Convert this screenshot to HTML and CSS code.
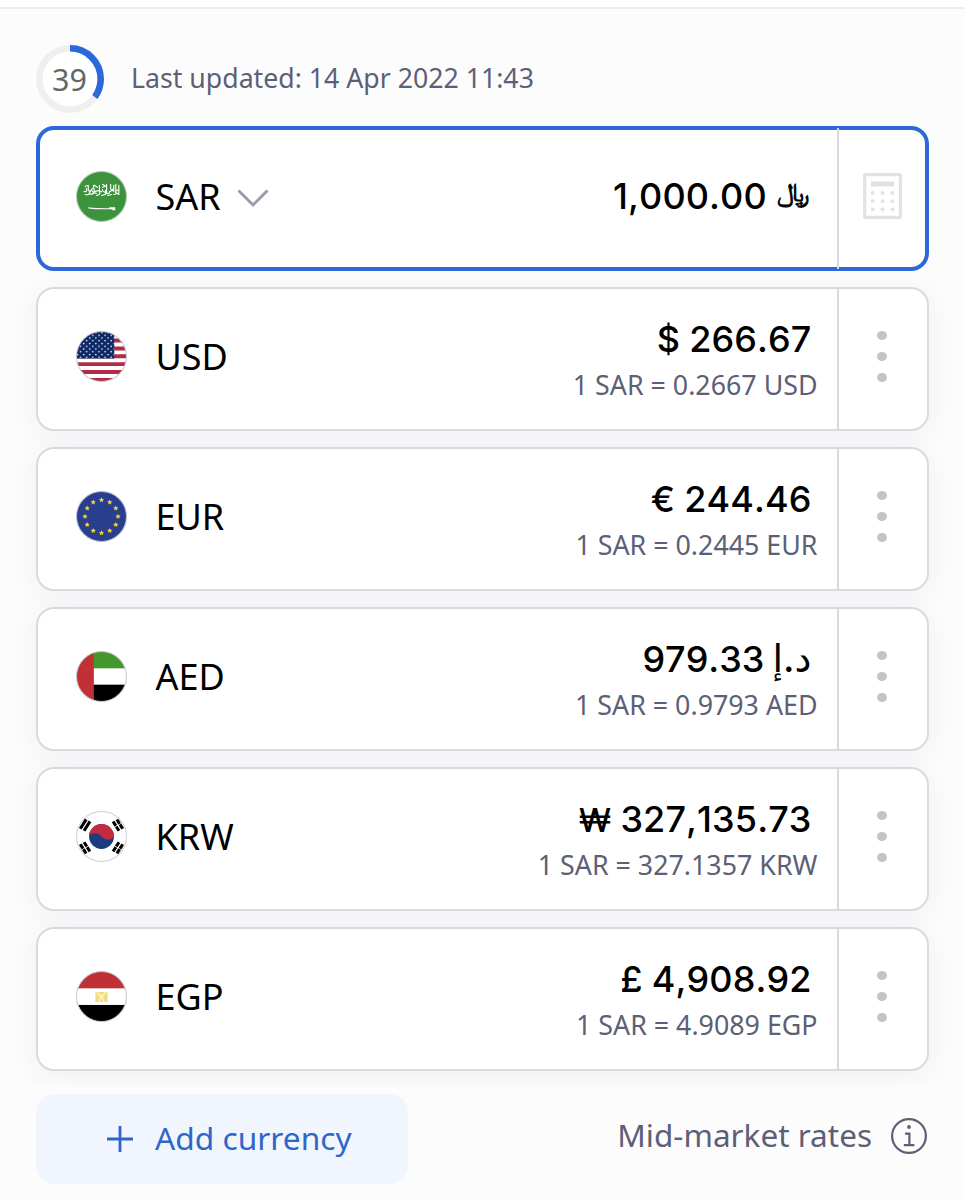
FILE: index.html
```
<!DOCTYPE html>
<html lang="en">
<head>
    <meta charset="UTF-8">
    <meta name="viewport" content="width=device-width, initial-scale=1.0">
    <title>Currency Converter</title>
    <link rel="stylesheet" href="styles.css">
</head>
<body>
    <div class="topbar"></div>
    <main class="converter">
        <div class="status">
            <div class="timer">
                <svg width="68" height="68" viewBox="0 0 68 68">
                    <circle cx="34" cy="34" r="30.7" fill="#fff" stroke="#efefef" stroke-width="6.6"/>
                    <circle cx="34" cy="34" r="30.7" fill="none" stroke="#2b68d9" stroke-width="6.6" pathLength="100" stroke-dasharray="35 65" transform="rotate(-90 34 34)"/>
                </svg>
                <span class="seconds">39</span>
            </div>
            <span class="updated">Last updated: 14 Apr 2022 11:43</span>
        </div>

        <div class="list">
            <div class="card active">
                <div class="currency">
                    <svg class="flag" viewBox="0 0 50 50">
                        <circle cx="25" cy="25" r="24.5" fill="#3c933b" stroke="#b5c9b5"/>
                        <g fill="none" stroke="#fff" stroke-width="1.1" stroke-linecap="round" stroke-linejoin="round">
                            <path d="M8 20c2 1 3-1 2-3M9 23c3 1 5-1 5-4M12 14v5c2 2 4 0 4-2M14 23c2-1 4 0 4-3l-1-6M18 14l3 2M20 24c3 0 4-2 3-5l-4 1M23 14v6c2 1 3 0 3-2M26 13l3 2-3 1M25 24l4-1v-4M30 13v8c1 2 3 1 3-1M31 24l4-1M34 13v5l3 2v-6M37 23c2 0 3-1 2-3M39 13v8l3 2v-9M42 18l-3 2M9 15l3-1M16 20l4 2M27 20l3 2M34 20l3-3"/>
                            <path d="M12.5 36.2c7 1 14 1 24 .8M33 36.2h5v1.8h-2"/>
                        </g>
                    </svg>
                    <span class="code">SAR</span>
                    <svg class="chevron" width="32" height="20" viewBox="0 0 32 20">
                        <path d="M1.5 2.5 16 17 30.5 2.5" fill="none" stroke="#9a9caa" stroke-width="3"/>
                    </svg>
                </div>
                <div class="values">
                    <div class="amount">1,000.00 <span class="riyal">﷼</span></div>
                </div>
                <div class="action">
                    <svg width="39" height="46" viewBox="0 0 39 46">
                        <rect x="1.6" y="1.6" width="35.8" height="42.8" rx="1" fill="none" stroke="#e1e1e6" stroke-width="3.2"/>
                        <rect x="8" y="8.5" width="23" height="5" fill="#e1e1e6"/>
                        <g fill="#e1e1e6">
                            <circle cx="9.7" cy="20" r="1.9"/><circle cx="19.5" cy="20" r="1.9"/><circle cx="29.3" cy="20" r="1.9"/>
                            <circle cx="9.7" cy="28.2" r="1.9"/><circle cx="19.5" cy="28.2" r="1.9"/><circle cx="29.3" cy="28.2" r="1.9"/>
                            <circle cx="9.7" cy="36.4" r="1.9"/><circle cx="19.5" cy="36.4" r="1.9"/><circle cx="29.3" cy="36.4" r="1.9"/>
                        </g>
                    </svg>
                </div>
            </div>

            <div class="card">
                <div class="currency">
                    <svg class="flag" viewBox="0 0 50 50">
                        <defs>
                            <clipPath id="round"><circle cx="25" cy="25" r="24.5"/></clipPath>
                            <pattern id="stars" width="6" height="5.4" patternUnits="userSpaceOnUse">
                                <circle cx="1.5" cy="1.4" r=".8" fill="#fff"/>
                                <circle cx="4.5" cy="4.1" r=".8" fill="#fff"/>
                            </pattern>
                        </defs>
                        <g clip-path="url(#round)">
                            <rect width="50" height="50" fill="#fff"/>
                            <path d="M0 1.9h50M0 9.6h50M0 17.3h50M0 25h50M0 32.7h50M0 40.4h50M0 48.1h50" stroke="#b22b47" stroke-width="3.85" transform="translate(0 -.2)"/>
                            <rect width="37.5" height="27" fill="#0c2766"/>
                            <rect width="37.5" height="27" fill="url(#stars)"/>
                        </g>
                        <circle cx="25" cy="25" r="24.5" fill="none" stroke="#c8c8d0"/>
                    </svg>
                    <span class="code">USD</span>
                </div>
                <div class="values">
                    <div class="amount">$ 266.67</div>
                    <div class="rate">1 SAR = 0.2667 USD</div>
                </div>
                <div class="action"><i class="dot"></i><i class="dot"></i><i class="dot"></i></div>
            </div>

            <div class="card">
                <div class="currency">
                    <svg class="flag" viewBox="0 0 50 50">
                        <defs>
                            <path id="star" fill="#f5d33c" d="M0-2.7.8-.9 2.6-.8 1.2.4 1.6 2.2 0 1.2-1.6 2.2-1.2.4-2.6-.8-.8-.9Z"/>
                        </defs>
                        <circle cx="25" cy="25" r="24.5" fill="#293f8e" stroke="#b8bfd8"/>
                        <use href="#star" x="25" y="8.8"/>
                        <use href="#star" x="33.1" y="11"/>
                        <use href="#star" x="39" y="16.9"/>
                        <use href="#star" x="41.2" y="25"/>
                        <use href="#star" x="39" y="33.1"/>
                        <use href="#star" x="33.1" y="39"/>
                        <use href="#star" x="25" y="41.2"/>
                        <use href="#star" x="16.9" y="39"/>
                        <use href="#star" x="11" y="33.1"/>
                        <use href="#star" x="8.8" y="25"/>
                        <use href="#star" x="11" y="16.9"/>
                        <use href="#star" x="16.9" y="11"/>
                    </svg>
                    <span class="code">EUR</span>
                </div>
                <div class="values">
                    <div class="amount">€ 244.46</div>
                    <div class="rate">1 SAR = 0.2445 EUR</div>
                </div>
                <div class="action"><i class="dot"></i><i class="dot"></i><i class="dot"></i></div>
            </div>

            <div class="card">
                <div class="currency">
                    <svg class="flag" viewBox="0 0 50 50">
                        <g clip-path="url(#round)">
                            <rect width="50" height="50" fill="#fff"/>
                            <rect width="50" height="17" fill="#43972b"/>
                            <rect y="33" width="50" height="17" fill="#000"/>
                            <rect width="17.5" height="50" fill="#c03035"/>
                        </g>
                        <circle cx="25" cy="25" r="24.5" fill="none" stroke="#c8c8cc"/>
                    </svg>
                    <span class="code">AED</span>
                </div>
                <div class="values">
                    <div class="amount">979.33 <span class="dirham">د.إ</span></div>
                    <div class="rate">1 SAR = 0.9793 AED</div>
                </div>
                <div class="action"><i class="dot"></i><i class="dot"></i><i class="dot"></i></div>
            </div>

            <div class="card">
                <div class="currency">
                    <svg class="flag" viewBox="0 0 50 50">
                        <circle cx="25" cy="25" r="24.5" fill="#fff" stroke="#d0d0d6"/>
                        <circle cx="25" cy="25" r="12.2" fill="#1c3c82"/>
                        <path d="M12.8 25a12.2 12.2 0 0 1 24.4 0c-1.4 3.5-8 4.5-12.2 0s-10-4-12.2 0Z" fill="#c42a40" transform="matrix(1 0 0 1 0 0)"/>
                        <g stroke="#000" stroke-width="3">
                            <path d="M4.2 17.4 10 8.2M7.9 19.4 13.7 10.2"/>
                            <path d="M45.8 32.6 40 41.8M42.1 30.6 36.3 39.8" stroke-dasharray="5 .7"/>
                            <path d="M45.8 17.4 40 8.2M42.1 19.4 36.3 10.2" stroke-dasharray="5 .7"/>
                            <path d="M4.2 32.6 10 41.8M7.9 30.6 13.7 39.8" stroke-dasharray="5 .7"/>
                        </g>
                    </svg>
                    <span class="code">KRW</span>
                </div>
                <div class="values">
                    <div class="amount"><span class="won">₩</span> 327,135.73</div>
                    <div class="rate">1 SAR = 327.1357 KRW</div>
                </div>
                <div class="action"><i class="dot"></i><i class="dot"></i><i class="dot"></i></div>
            </div>

            <div class="card">
                <div class="currency">
                    <svg class="flag" viewBox="0 0 50 50">
                        <g clip-path="url(#round)">
                            <rect width="50" height="50" fill="#fff"/>
                            <rect width="50" height="17" fill="#c03035"/>
                            <rect y="33.3" width="50" height="17" fill="#000"/>
                        </g>
                        <path d="M19 21 23.5 20.5h3l4.5.5v9.5h-12Z" fill="#f3dc7a"/>
                        <path d="M22.5 30.5 25 24l2.5 6.5M21.5 21.5 24 25M28.5 21.5 26 25" fill="none" stroke="#fdf8e0" stroke-width="1.1"/>
                        <circle cx="25" cy="25" r="24.5" fill="none" stroke="#c8c8cc"/>
                    </svg>
                    <span class="code">EGP</span>
                </div>
                <div class="values">
                    <div class="amount">£ 4,908.92</div>
                    <div class="rate">1 SAR = 4.9089 EGP</div>
                </div>
                <div class="action"><i class="dot"></i><i class="dot"></i><i class="dot"></i></div>
            </div>
        </div>

        <div class="footer">
            <button class="add" type="button">
                <svg width="26" height="26" viewBox="0 0 26 26">
                    <path d="M13 0v26M0 13h26" stroke="#2f66c8" stroke-width="2.8"/>
                </svg>
                <span>Add currency</span>
            </button>
            <div class="market">
                <span>Mid-market rates</span>
                <svg width="36" height="36" viewBox="0 0 36 36">
                    <g fill="none" stroke="#5c6076" stroke-width="2.2">
                        <circle cx="18" cy="18" r="16.9"/>
                        <path d="M14 15.6h4.4v11.2M12.8 27.2h10.6"/>
                    </g>
                    <circle cx="18" cy="9" r="1.9" fill="#5c6076"/>
                </svg>
            </div>
        </div>
    </main>
</body>
</html>
```
FILE: styles.css
```
* {
    box-sizing: border-box;
}
body {
    margin: 0;
    background-color: #fcfcfc;
    color: #000;
    font-family: "Noto Sans", sans-serif;
}
.topbar {
    height: 9px;
    background-color: #fff;
    border-bottom: 2px solid #ededee;
}
.converter {
    padding: 36px 36px 0;
}
.status {
    display: flex;
    align-items: center;
    gap: 27px;
    height: 67px;
}
.timer {
    display: grid;
    place-items: center;
    width: 68px;
    height: 68px;
}
.timer svg, .seconds {
    grid-area: 1 / 1;
}
.seconds {
    padding-right: 1px;
    font-size: 30.5px;
    line-height: 66px;
    color: #666;
}
.updated {
    padding-bottom: 2px;
    font-size: 26.7px;
    color: #5c6076;
    white-space: nowrap;
}
.list {
    display: flex;
    flex-direction: column;
    gap: 16px;
    margin: 0 -36px;
    padding: 14px 36px;
    overflow: hidden;
}
.card {
    display: flex;
    height: 144px;
    background-color: #fff;
    border: 2px solid #d9dadf;
    border-radius: 18px;
    box-shadow: 0 6px 30px rgba(50, 55, 120, 0.06);
}
.card.active {
    height: 145px;
    border: 4px solid #2b68d9;
    box-shadow: none;
}
.currency {
    display: flex;
    align-items: center;
    padding: 0 0 6px 38px;
}
.active .currency {
    padding: 0 0 5px 36px;
}
.flag {
    width: 51px;
    height: 51px;
}
.code {
    margin-left: 28.5px;
    font-size: 36px;
}
.chevron {
    margin: 4px 0 0 16px;
}
.values {
    flex: 1;
    display: flex;
    flex-direction: column;
    justify-content: center;
    align-items: flex-end;
    padding: 1px 19.5px 0 0;
}
.active .values {
    padding-bottom: 6px;
    padding-right: 21px;
}
.amount {
    margin-right: 6px;
    font-family: Inter, "DejaVu Sans", sans-serif;
    font-size: 36px;
    font-weight: 500;
    font-kerning: none;
    letter-spacing: 0.1px;
    line-height: 50px;
    word-spacing: -0.5px;
    white-space: nowrap;
}
.rate {
    font-size: 26.8px;
    line-height: 42px;
    color: #5c6076;
    white-space: nowrap;
}
.riyal {
    display: inline-block;
    margin-left: 1px;
    font-size: 30px;
    line-height: 1;
    vertical-align: 6px;
    transform: scaleY(0.85);
    -webkit-text-stroke: 0.9px #000;
}
.dirham {
    margin-left: -1px;
    font-size: 38px;
    line-height: 1;
}
.won {
    font-size: 33px;
    line-height: 1;
}
.action {
    display: flex;
    flex-direction: column;
    align-items: center;
    justify-content: center;
    gap: 12px;
    width: 90px;
    padding: 0 2px 6px 0;
    border-left: 2px solid #d9dadf;
}
.active .action {
    width: 88px;
    margin: -2px 0;
    padding-right: 0;
}
.dot {
    width: 10px;
    height: 9px;
    border-radius: 50%;
    background-color: #c3c3cb;
}
.footer {
    display: flex;
    justify-content: space-between;
    margin-top: 9px;
}
.add {
    display: flex;
    align-items: center;
    gap: 22px;
    width: 372px;
    height: 90px;
    padding: 0 0 0 71px;
    border: none;
    border-radius: 18px;
    background-color: #f1f6fe;
    color: #2f66c8;
    font-family: inherit;
    font-size: 31.7px;
}
.add span, .market span {
    padding-bottom: 3px;
}
.market {
    display: flex;
    align-items: center;
    gap: 19px;
    height: 84px;
    padding-right: 2px;
    font-size: 31.5px;
    color: #5c6076;
}
```
